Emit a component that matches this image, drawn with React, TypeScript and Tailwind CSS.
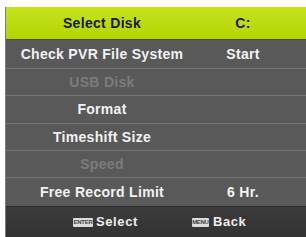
const rows = [
  { label: 'Check PVR File System', value: 'Start', dim: false, h: 'h-[28px]' },
  { label: 'USB Disk', value: '', dim: true, h: 'h-[27px]' },
  { label: 'Format', value: '', dim: false, h: 'h-[28px]' },
  { label: 'Timeshift Size', value: '', dim: false, h: 'h-[27px]' },
  { label: 'Speed', value: '', dim: true, h: 'h-[27px]' },
  { label: 'Free Record Limit', value: '6 Hr.', dim: false, h: 'h-[29px]' },
]

function KeyIcon({ text, w }: { text: string; w: string }) {
  return (
    <span
      className={`${w} h-[9px] bg-[#dcdcdc] rounded-[1px] flex items-center justify-center text-[6px] font-bold leading-none text-[#444] tracking-[-0.3px]`}
    >
      {text}
    </span>
  )
}

export default function App() {
  return (
    <div className="w-[306px] h-[237px] bg-white pt-[7px] pl-[5px] font-['Liberation_Sans',Arial,sans-serif]">
      <div className="w-[301px] h-[230px] flex flex-col bg-[#585858] border-l border-[#7a7a7a]">
        <div className="h-[33px] flex items-center bg-gradient-to-b from-[#c6e21c] to-[#b2d500] border-b border-[#4a4f30]">
          <div className="w-[192px] text-center text-[14px] font-bold text-[#1a1a1a] tracking-[0.3px]">Select Disk</div>
          <div className="w-[90px] text-center text-[14px] font-bold text-[#1a1a1a] tracking-[0.3px]">C:</div>
        </div>
        {rows.map((r, i) => (
          <div
            key={r.label}
            className={`${r.h} flex items-center ${i === 0 ? '' : 'border-t border-[#747474]'} bg-[#595959]`}
          >
            <div
              className={`w-[192px] text-center text-[14px] font-bold tracking-[0.3px] ${r.dim ? 'text-[#7c7c7c]' : 'text-[#f2f2f2]'}`}
            >
              {r.label}
            </div>
            <div className="w-[90px] text-center text-[14px] font-bold tracking-[0.3px] text-[#f2f2f2]">{r.value}</div>
          </div>
        ))}
        <div className="flex-1 flex items-center bg-gradient-to-b from-[#3c3c3c] to-[#323232] border-t border-[#2c2c2c]">
          <div className="ml-[67px] flex items-center gap-[3px]">
            <KeyIcon text="ENTER" w="w-[20px]" />
            <span className="text-[13px] font-bold text-[#eee] tracking-[0.6px]">Select</span>
          </div>
          <div className="ml-[54px] flex items-center gap-[4px]">
            <KeyIcon text="MENU" w="w-[17px]" />
            <span className="text-[13px] font-bold text-[#eee] tracking-[0.6px]">Back</span>
          </div>
        </div>
      </div>
    </div>
  )
}
